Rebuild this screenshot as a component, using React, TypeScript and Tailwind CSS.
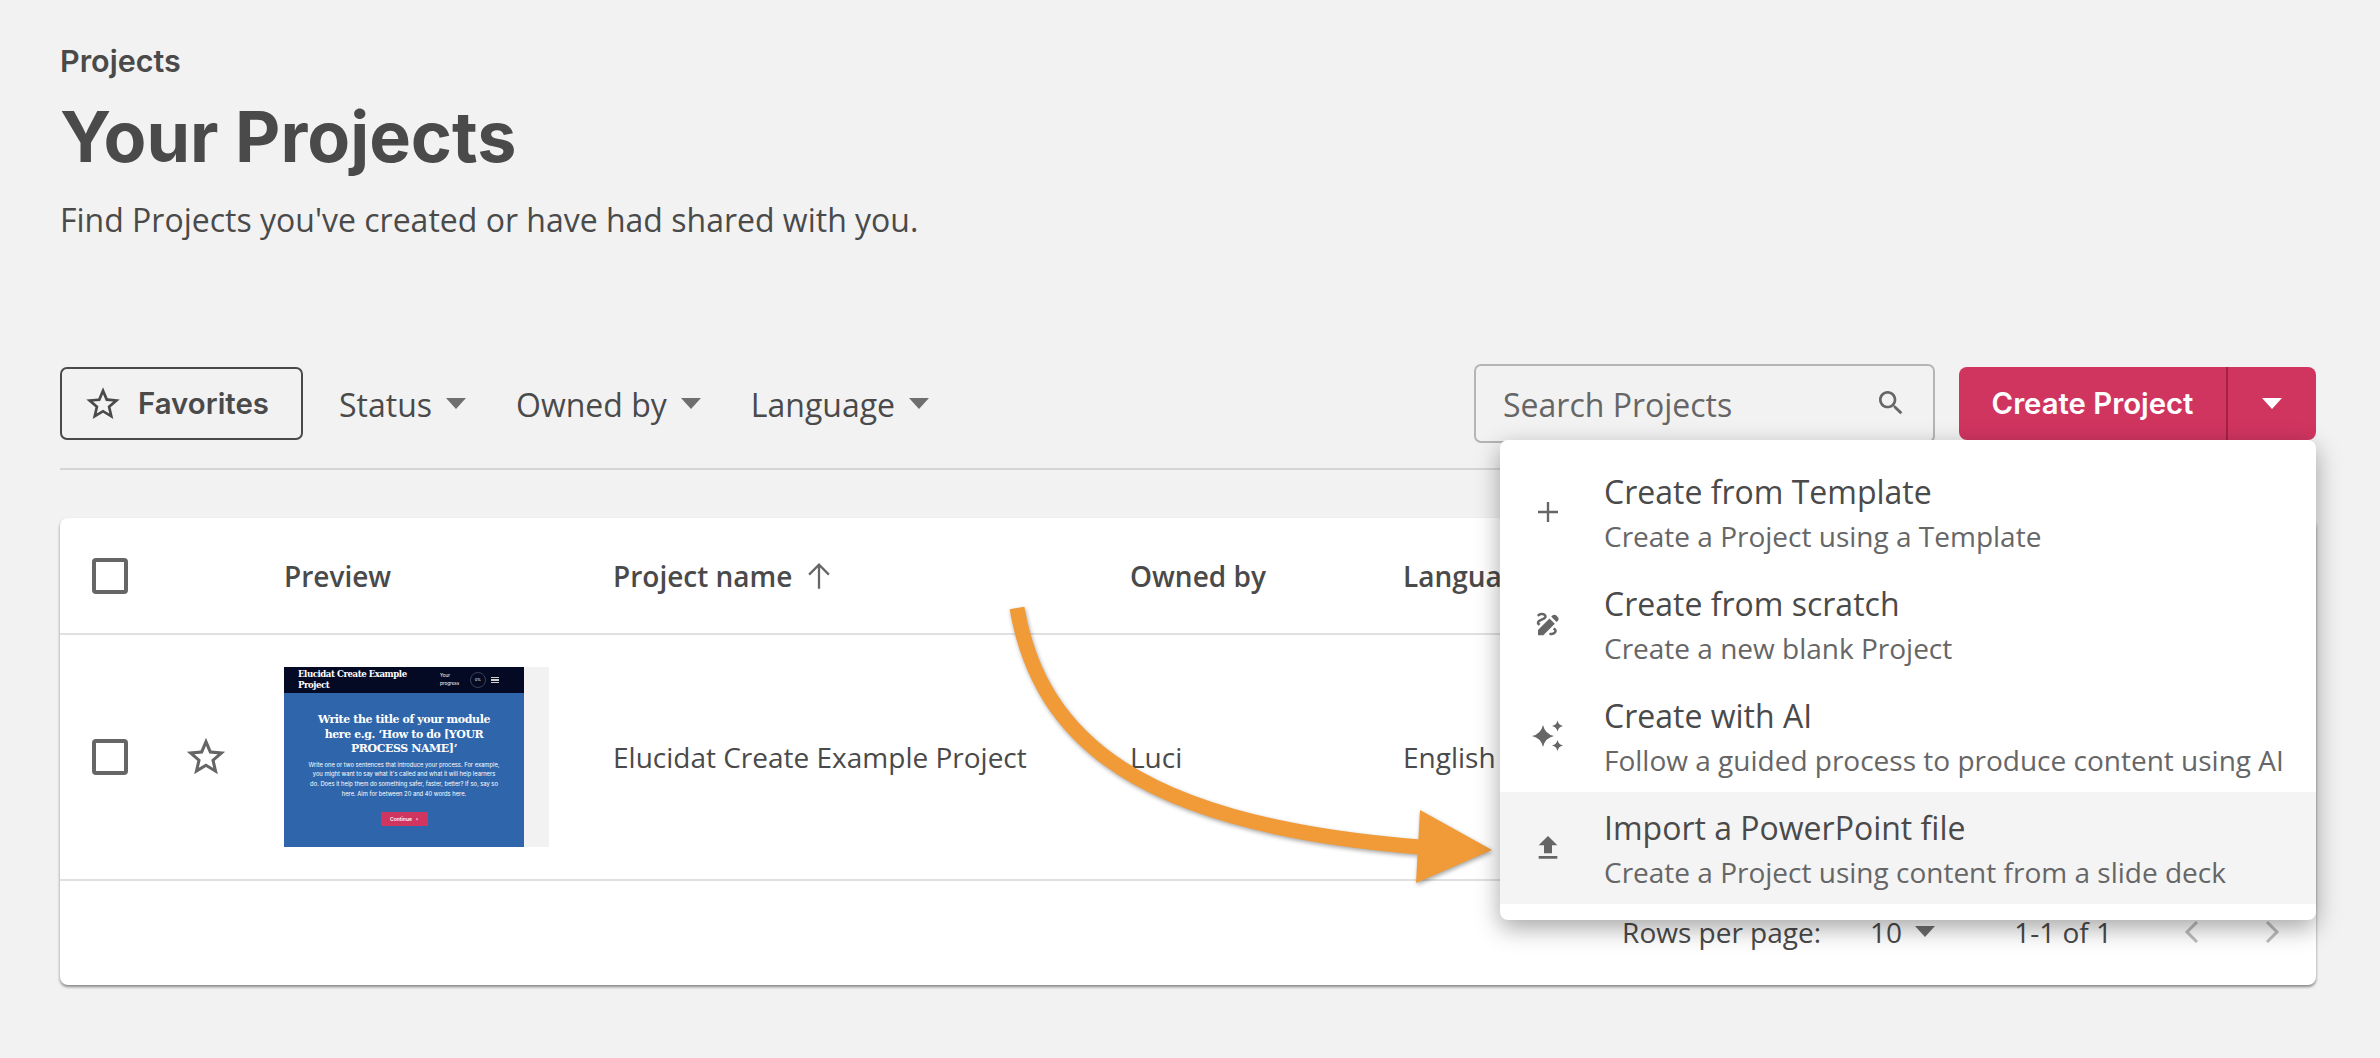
import React from "react";

const OPEN = "font-['Open_Sans',sans-serif]";
const STAR = "M22 9.24l-7.19-.62L12 2 9.19 8.63 2 9.24l5.46 4.73L5.82 21 12 17.27 18.18 21l-1.63-7.03L22 9.24zM12 15.4l-3.76 2.27 1-4.28-3.32-2.88 4.38-.38L12 6.1l1.71 4.04 4.38.38-3.32 2.88 1 4.28L12 15.4z";

function Star({ className }: { className: string }) {
  return (
    <svg viewBox="0 0 24 24" className={className} fill="currentColor">
      <path d={STAR} />
    </svg>
  );
}

function Caret({ className = "" }: { className?: string }) {
  return (
    <svg viewBox="0 0 20 11" className={`w-[20px] h-[11px] ${className}`} fill="#6f6f6f">
      <path d="M0 0h20L10 11z" />
    </svg>
  );
}

function Filter({ label, gap }: { label: string; gap: string }) {
  return (
    <div className={`flex items-center gap-[14px] ${gap}`}>
      <span className="pt-[2px] text-[32px] leading-[44px] text-[#4a4a4a]">{label}</span>
      <Caret />
    </div>
  );
}

function Checkbox() {
  return <div className="w-[36px] h-[36px] rounded-[4px] border-[4px] border-[#666666]" />;
}

function Sparkles() {
  const s = (cx: number, cy: number, r: number) =>
    `M${cx} ${cy - r}Q${cx + r * 0.18} ${cy - r * 0.18} ${cx + r} ${cy}Q${cx + r * 0.18} ${cy + r * 0.18} ${cx} ${cy + r}Q${cx - r * 0.18} ${cy + r * 0.18} ${cx - r} ${cy}Q${cx - r * 0.18} ${cy - r * 0.18} ${cx} ${cy - r}z`;
  return (
    <svg viewBox="0 0 36 36" className="w-[36px] h-[36px]" fill="#666666">
      <path d={s(13, 18, 11)} />
      <path d={s(27.5, 8, 5.5)} />
      <path d={s(27.5, 27.5, 5.5)} />
    </svg>
  );
}

const menu = [
  {
    title: "Create from Template",
    sub: "Create a Project using a Template",
    icon: (
      <svg viewBox="0 0 24 24" className="w-[24px] h-[24px]" fill="none" stroke="#666666" strokeWidth="2.4">
        <path d="M12 2v20M2 12h20" />
      </svg>
    ),
  },
  {
    title: "Create from scratch",
    sub: "Create a new blank Project",
    icon: (
      <svg viewBox="0 0 24 24" className="w-[30px] h-[30px]" fill="#666666">
        <path d="M18.85 10.39l1.06-1.06c.78-.78.78-2.05 0-2.83L18.5 5.09c-.78-.78-2.05-.78-2.83 0l-1.06 1.06 4.24 4.24zm-5.66-2.83L4 16.76V21h4.24l9.19-9.19-4.24-4.25zM19 17.5c0 2.19-2.54 3.5-5 3.5-.55 0-1-.45-1-1s.45-1 1-1c1.54 0 3-.73 3-1.5 0-.47-.48-.87-1.23-1.2l1.48-1.48c1.07.63 1.75 1.47 1.75 2.68zM4.58 13.35C3.61 12.79 3 12.06 3 11c0-1.8 1.89-2.63 3.56-3.36C7.59 7.18 9 6.56 9 6c0-.41-.78-1-2-1-1.26 0-1.8.61-1.83.64-.35.41-.98.46-1.4.12-.41-.34-.49-.95-.15-1.38C3.73 4.24 4.76 3 7 3s4 1.32 4 3c0 1.87-1.93 2.72-3.64 3.47C6.42 9.88 5 10.5 5 11c0 .31.43.6 1.07.86l-1.49 1.49z" />
      </svg>
    ),
  },
  { title: "Create with AI", sub: "Follow a guided process to produce content using AI", icon: <Sparkles /> },
  {
    title: "Import a PowerPoint file",
    sub: "Create a Project using content from a slide deck",
    active: true,
    icon: (
      <svg viewBox="0 0 24 24" className="w-[32px] h-[32px]" fill="#666666">
        <path d="M9 16h6v-6h4l-7-7-7 7h4zm-4 2h14v2H5z" />
      </svg>
    ),
  },
];

function Thumbnail() {
  return (
    <div className="w-[265px] h-[180px] bg-[#f2f2f2] overflow-hidden">
      <div className="w-[240px] h-[180px] bg-[#2f66ab] flex flex-col text-white">
        <div className="h-[26px] bg-[#050a24] flex items-center pl-[14px] pr-[18px]">
          <div className="w-[142px] text-[8.6px] leading-[11px] font-bold font-['DejaVu_Serif',serif] tracking-[-0.45px]">
            Elucidat Create Example<br />Project
          </div>
          <div className="w-[30px] text-[4.6px] leading-[8px] font-['Inter',sans-serif]">Your progress</div>
          <div className="w-[16px] h-[16px] rounded-full border border-[#3b4058] flex items-center justify-center text-[3.6px] font-['Inter',sans-serif]">
            0%
          </div>
          <div className="ml-[5px] w-[8px] flex flex-col gap-[1px]">
            <div className="h-[1.5px] bg-[#d0d0d0]" />
            <div className="h-[1.5px] bg-[#d0d0d0]" />
            <div className="h-[1.5px] bg-[#d0d0d0]" />
          </div>
        </div>
        <div className="flex flex-col items-center text-center pt-[20px]">
          <div className="whitespace-nowrap text-[11px] leading-[14.5px] font-bold font-['DejaVu_Serif',serif] tracking-[-0.4px]">
            Write the title of your module<br />here e.g. ‘How to do [YOUR<br />PROCESS NAME]’
          </div>
          <div className="whitespace-nowrap mt-[3px] text-[5.8px] leading-[9.7px] font-['Inter',sans-serif]">
            Write one or two sentences that introduce your process. For example,<br />
            you might want to say what it's called and what it will help learners<br />
            do. Does it help them do something safer, faster, better? If so, say so<br />
            here. Aim for between 20 and 40 words here.
          </div>
          <div className="mt-[14px] w-[47px] h-[14px] rounded-[1px] bg-[#d03560] flex items-center justify-center gap-[4px] text-[5px] font-semibold font-['Inter',sans-serif]">
            Continue <span>›</span>
          </div>
        </div>
      </div>
    </div>
  );
}

export default function App() {
  return (
    <div className={`relative w-[2380px] h-[1058px] overflow-hidden bg-[#f2f2f2] pl-[60px] pr-[64px] pt-[41px] ${OPEN} text-[#4a4a4a]`}>
      <div className="font-['Inter',sans-serif] font-semibold text-[30.5px] leading-[40px]">Projects</div>
      <h1 className="mt-[16px] font-['Inter',sans-serif] font-bold text-[70px] leading-[80px]">Your Projects</h1>
      <p className="mt-[21px] text-[32px] leading-[44px]">Find Projects you've created or have had shared with you.</p>

      <div className="mt-[122px] flex items-center h-[79px]">
        <div className="w-[243px] h-[73px] rounded-[7px] border-2 border-[#4a4a4a] flex items-center pl-[24px] gap-[18px]">
          <Star className="w-[40px] h-[40px] -ml-[3px] -mr-[3px]" />
          <span className="font-['Inter',sans-serif] font-semibold text-[29.4px] leading-[40px]">Favorites</span>
        </div>
        <Filter label="Status" gap="ml-[36px]" />
        <Filter label="Owned by" gap="ml-[50px]" />
        <Filter label="Language" gap="ml-[50px]" />
        <div className="ml-auto w-[461px] h-[79px] rounded-[7px] border-2 border-[#b5b5b5] flex items-center justify-between pl-[27px] pr-[26px]">
          <span className="pt-[2px] text-[32px] leading-[44px] text-[#666666]">Search Projects</span>
          <svg viewBox="0 0 24 24" className="w-[32px] h-[32px] -mt-[2px]" fill="#666666">
            <path d="M15.5 14h-.79l-.28-.27C15.41 12.59 16 11.11 16 9.5 16 5.91 13.09 3 9.5 3S3 5.91 3 9.5 5.91 16 9.5 16c1.61 0 3.09-.59 4.23-1.57l.27.28v.79l5 4.99L20.49 19l-4.99-5zm-6 0C7.01 14 5 11.99 5 9.5S7.01 5 9.5 5 14 7.01 14 9.5 11.99 14 9.5 14z" />
          </svg>
        </div>
        <div className="ml-[24px] w-[357px] h-[73px] rounded-[8px] bg-[#d03560] flex items-center text-white">
          <div className="w-[269px] h-full flex items-center justify-center border-r-2 border-[#a3223f] font-['Inter',sans-serif] font-semibold text-[29.3px]">
            Create Project
          </div>
          <div className="flex-1 flex items-center justify-center">
            <svg viewBox="0 0 20 11" className="w-[20px] h-[11px]" fill="#ffffff">
              <path d="M0 0h20L10 11z" />
            </svg>
          </div>
        </div>
      </div>

      <div className="mt-[25px] h-[2px] bg-[#d5d5d5]" />

      <div className="mt-[48px] h-[467px] rounded-[8px] bg-white shadow-[0_2px_3px_rgba(0,0,0,0.45)] flex flex-col">
        <div className="h-[117px] border-b-2 border-[#e0e0e0] grid grid-cols-[224px_329px_517px_273px_1fr] items-center font-semibold text-[28px] leading-[40px]">
          <div className="pl-[32px]"><Checkbox /></div>
          <div>Preview</div>
          <div className="flex items-center gap-[10px]">
            Project name
            <svg viewBox="0 0 24 24" className="w-[34px] h-[34px]" fill="none" stroke="#666666" strokeWidth="1.6">
              <path d="M12 21V4M5 11l7-7 7 7" />
            </svg>
          </div>
          <div>Owned by</div>
          <div>Language</div>
        </div>
        <div className="h-[246px] border-b-2 border-[#e0e0e0] grid grid-cols-[224px_329px_517px_273px_1fr] items-center text-[28px] leading-[40px]">
          <div className="pl-[32px] flex items-center">
            <Checkbox />
            <Star className="w-[46px] h-[46px] ml-[55px] text-[#666666]" />
          </div>
          <Thumbnail />
          <div>Elucidat Create Example Project</div>
          <div>Luci</div>
          <div>English</div>
        </div>
        <div className="flex-1 flex items-center justify-end pb-[3px] text-[28px] leading-[40px]">
          <span className="w-[248px]">Rows per page:</span>
          <span>10</span>
          <Caret className="ml-[13px]" />
          <span className="ml-[79px]">1-1 of 1</span>
          <svg viewBox="0 0 24 24" className="ml-[68px] w-[24px] h-[34px]" fill="none" stroke="#bdbdbd" strokeWidth="3">
            <path d="M17 2 7 12l10 10" />
          </svg>
          <svg viewBox="0 0 24 24" className="ml-[56px] mr-[32px] w-[24px] h-[34px]" fill="none" stroke="#bdbdbd" strokeWidth="3">
            <path d="m7 2 10 10L7 22" />
          </svg>
        </div>
      </div>

      <svg className="absolute left-0 top-0 w-[2380px] h-[1058px] pointer-events-none drop-shadow-[1px_2px_2px_rgba(0,0,0,0.35)]" viewBox="0 0 2380 1058">
        <path d="M1017 608C1040 740 1140 825 1420 847" fill="none" stroke="#f09a38" strokeWidth="15" />
        <path d="M1420 810L1492 850L1416 883z" fill="#f09a38" />
      </svg>

      <div className="absolute left-[1500px] top-[440px] w-[816px] py-[16px] rounded-[8px] bg-white shadow-[0_8px_24px_rgba(0,0,0,0.35)]">
        {menu.map((m) => (
          <div key={m.title} className={`h-[112px] flex items-center ${m.active ? "bg-[#f4f4f4]" : ""}`}>
            <div className="w-[104px] pr-[8px] flex justify-center">{m.icon}</div>
            <div className="flex flex-col pt-[4px]">
              <div className="text-[32px] leading-[40px] text-[#4a4a4a]">{m.title}</div>
              <div className="mt-[4px] text-[28px] leading-[40px] text-[#666666]">{m.sub}</div>
            </div>
          </div>
        ))}
      </div>
    </div>
  );
}
